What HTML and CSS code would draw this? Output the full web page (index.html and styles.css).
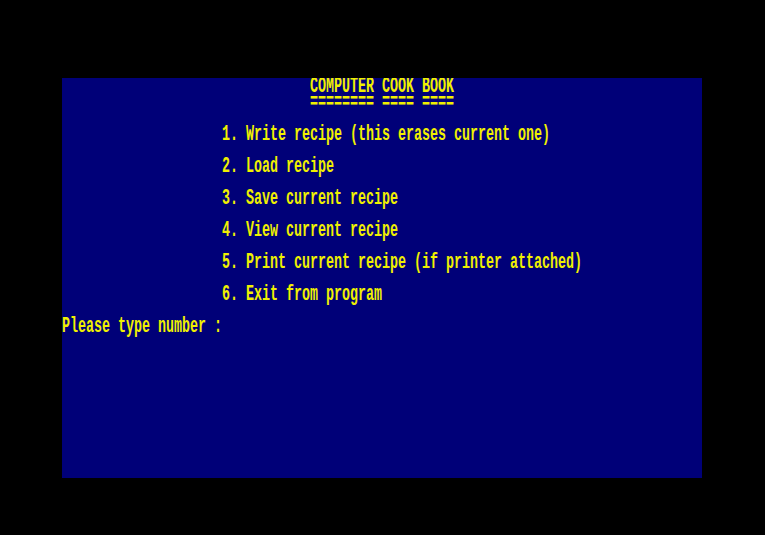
FILE: index.html
```html
<!DOCTYPE html>
<html>
<head>
<meta charset="utf-8">
<link rel="stylesheet" href="styles.css">
</head>
<body>
<div class="screen">
<pre class="text">                               COMPUTER COOK BOOK
                               ======== ==== ====

                    1. Write recipe (this erases current one)

                    2. Load recipe

                    3. Save current recipe

                    4. View current recipe

                    5. Print current recipe (if printer attached)

                    6. Exit from program

Please type number :</pre>
</div>
</body>
</html>
```
FILE: styles.css
```css
html, body {
  margin: 0;
  padding: 0;
  background: #000000;
  width: 765px;
  height: 535px;
  overflow: hidden;
}
.screen {
  margin: 78px 0 0 62px;
  width: 640px;
  height: 400px;
  background: #000078;
  overflow: hidden;
}
.text {
  margin: 0;
  padding-top: 1.25px;
  font-family: "Liberation Mono", "DejaVu Sans Mono", monospace;
  font-weight: bold;
  font-size: 13.333px;
  line-height: 10px;
  color: #f0f000;
  white-space: pre;
  transform: scaleY(1.6);
  transform-origin: 0 0;
}
```
